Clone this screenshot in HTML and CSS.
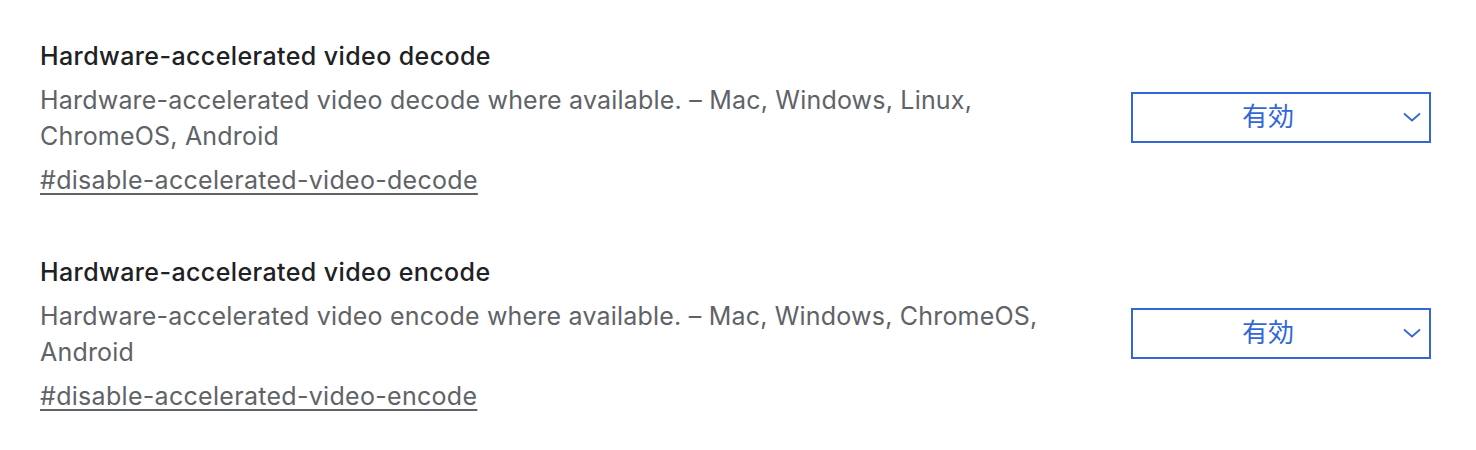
FILE: index.html
```html
<!DOCTYPE html>
<html>
<head>
<meta charset="utf-8">
<link rel="stylesheet" href="styles.css">
</head>
<body>
<div class="list">
  <div class="experiment">
    <div class="info">
      <h3 class="name">Hardware-accelerated video decode</h3>
      <p class="desc">Hardware-accelerated video decode where available. – Mac, Windows, Linux, ChromeOS, Android</p>
      <a class="permalink" href="#">#disable-accelerated-video-decode</a>
    </div>
    <div class="select">
      <span class="value">有効</span>
      <svg class="chev" width="18" height="10" viewBox="0 0 18 10"><path d="M1 1.5 L9 8.5 L17 1.5" fill="none" stroke="#3367d6" stroke-width="1.8"/></svg>
    </div>
  </div>
  <div class="experiment">
    <div class="info">
      <h3 class="name">Hardware-accelerated video encode</h3>
      <p class="desc">Hardware-accelerated video encode where available. – Mac, Windows, ChromeOS, Android</p>
      <a class="permalink" href="#">#disable-accelerated-video-encode</a>
    </div>
    <div class="select">
      <span class="value">有効</span>
      <svg class="chev" width="18" height="10" viewBox="0 0 18 10"><path d="M1 1.5 L9 8.5 L17 1.5" fill="none" stroke="#3367d6" stroke-width="1.8"/></svg>
    </div>
  </div>
</div>
</body>
</html>
```
FILE: styles.css
```css
html, body {
  margin: 0;
  padding: 0;
  background: #ffffff;
}
body {
  font-family: Inter, "Noto Sans CJK JP", sans-serif;
  -webkit-font-smoothing: antialiased;
}
.list {
  padding: 38px 45px 0 40px;
  display: flex;
  flex-direction: column;
  gap: 56px;
}
.experiment {
  display: flex;
  align-items: center;
  justify-content: space-between;
}
.info {
  width: 1060px;
}
.name {
  margin: 0;
  font-size: 25px;
  letter-spacing: 0.4px;
  font-weight: 500;
  color: #202124;
  line-height: 36px;
  height: 36px;
}
.desc {
  margin: 8px 0 0 0;
  font-size: 25px;
  letter-spacing: 0.2px;
  font-weight: 400;
  color: #5f6368;
  line-height: 36px;
  width: 1040px;
}
.permalink {
  display: inline-block;
  margin-top: 8px;
  font-size: 25px;
  letter-spacing: 0.3px;
  line-height: 36px;
  color: #5f6368;
  text-decoration: underline;
  text-underline-offset: 4px;
  text-decoration-thickness: 2px;
}
.select {
  box-sizing: border-box;
  width: 300px;
  height: 51px;
  margin-top: -2px;
  border: 2px solid #3367d6;
  display: flex;
  align-items: center;
  color: #3367d6;
}
.value {
  flex: 1;
  text-align: center;
  font-size: 26px;
  line-height: 30px;
  font-family: "Noto Sans CJK JP", sans-serif;
  margin-top: -4px;
}
.chev {
  margin-right: 8px;
}
```
